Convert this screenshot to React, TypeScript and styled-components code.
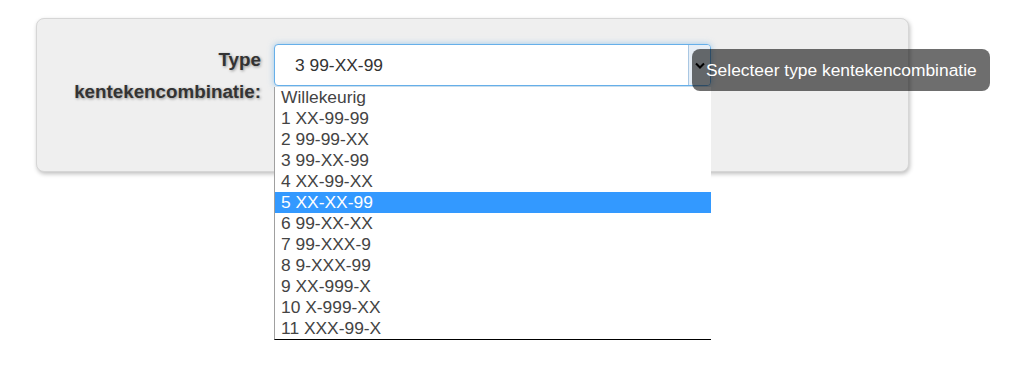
import React, { FC } from 'react';
import styled, { createGlobalStyle } from 'styled-components';

const options = [
  'Willekeurig',
  '1 XX-99-99',
  '2 99-99-XX',
  '3 99-XX-99',
  '4 XX-99-XX',
  '5 XX-XX-99',
  '6 99-XX-XX',
  '7 99-XXX-9',
  '8 9-XXX-99',
  '9 XX-999-X',
  '10 X-999-XX',
  '11 XXX-99-X',
];

const GlobalStyle = createGlobalStyle`
  html, body {
    margin: 0;
    padding: 0;
    background: #fff;
    font-family: "Liberation Sans", Arial, sans-serif;
    color: #333;
  }
`;

const Page = styled.div`
  padding: 18px 0 0 36px;
  width: 873px;
  height: 369px;
  box-sizing: content-box;
`;

const Panel = styled.div`
  display: flex;
  align-items: flex-start;
  gap: 13px;
  height: 154px;
  box-sizing: border-box;
  padding: 25px 0 0 0;
  background: #efefef;
  border: 1px solid #d6d6d6;
  border-radius: 8px;
  box-shadow: 1px 2px 4px rgba(0, 0, 0, 0.25);
`;

const Label = styled.label`
  width: 224px;
  text-align: right;
  font-size: 18.8px;
  font-weight: bold;
  line-height: 32px;
  color: #333;
  text-shadow: 1px 1px 3px rgba(0, 0, 0, 0.4);
`;

const Field = styled.div`
  position: relative;
  width: 437px;
`;

const SelectBox = styled.div`
  display: flex;
  align-items: center;
  height: 42px;
  box-sizing: border-box;
  border: 1px solid #66afe9;
  border-radius: 4px;
  background: #fff;
  box-shadow: 0 0 6px rgba(102, 175, 233, 0.6);
  overflow: hidden;
`;

const SelectValue = styled.span`
  flex: 1;
  padding-left: 20px;
  font-size: 17.4px;
  color: #333;
`;

const ArrowButton = styled.span`
  display: flex;
  align-items: center;
  justify-content: center;
  width: 21px;
  height: 100%;
  border-left: 1px solid #a9c7e3;
  background: #e6eef6;
`;

const ListBox = styled.ul`
  position: absolute;
  top: 43px;
  left: 0;
  width: 437px;
  margin: 0;
  padding: 0;
  list-style: none;
  background: #fff;
  border-left: 1px solid #a0a0a0;
  border-bottom: 1px solid #000;
  box-sizing: border-box;
  z-index: 2;
`;

const Option = styled.li<{ $selected?: boolean }>`
  height: 21px;
  line-height: 21px;
  padding-left: 6px;
  font-size: 17.4px;
  color: ${({ $selected }) => ($selected ? '#fff' : '#444')};
  background: ${({ $selected }) => ($selected ? '#3399ff' : 'transparent')};
`;

const Tooltip = styled.div`
  position: absolute;
  top: 5px;
  left: 418px;
  height: 42px;
  display: flex;
  align-items: center;
  padding: 0 13px 0 14px;
  border-radius: 8px;
  background: rgba(0, 0, 0, 0.57);
  color: #fff;
  font-size: 17.4px;
  white-space: nowrap;
  z-index: 3;
`;

const Chevron: FC = () => (
  <svg width="10" height="7" viewBox="0 0 10 7">
    <path d="M1 1.5 L5 5.5 L9 1.5" fill="none" stroke="#000" strokeWidth="2" />
  </svg>
);

export default function App() {
  return (
    <>
      <GlobalStyle />
      <Page>
        <Panel>
          <Label>
            Type
            <br />
            kentekencombinatie:
          </Label>
          <Field>
            <SelectBox>
              <SelectValue>3 99-XX-99</SelectValue>
              <ArrowButton>
                <Chevron />
              </ArrowButton>
            </SelectBox>
            <ListBox>
              {options.map((o) => (
                <Option key={o} $selected={o === '5 XX-XX-99'}>
                  {o}
                </Option>
              ))}
            </ListBox>
            <Tooltip>Selecteer type kentekencombinatie</Tooltip>
          </Field>
        </Panel>
      </Page>
    </>
  );
}
